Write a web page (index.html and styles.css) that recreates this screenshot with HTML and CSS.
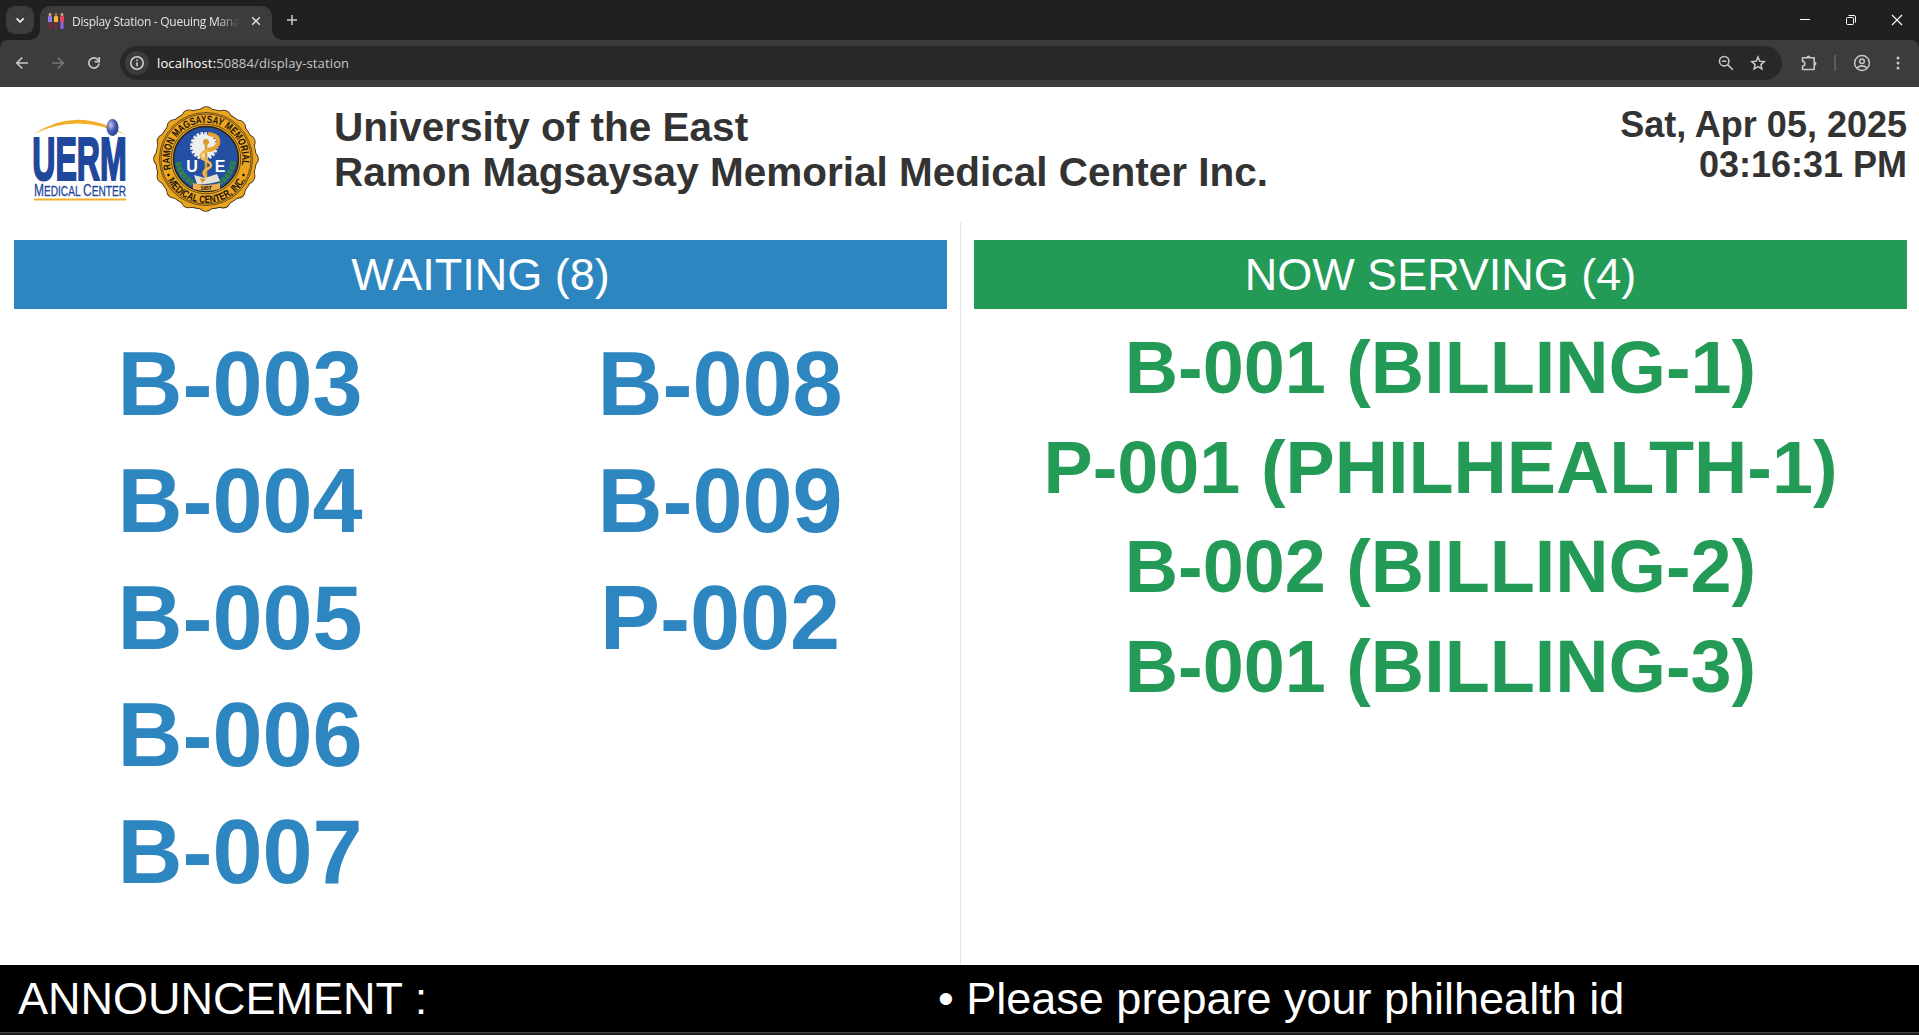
FILE: index.html
```html
<!DOCTYPE html>
<html lang="en">
<head>
<meta charset="utf-8">
<title>Display Station - Queuing Management</title>
<link rel="stylesheet" href="styles.css">
</head>
<body>
<div class="window">
  <div class="tabstrip">
    <div class="tab-search"><svg width="28" height="28" viewBox="0 0 28 28"><path d="M10.500 12.300l3.600 3.600 3.600-3.600" fill="none" stroke="#e3e3e3" stroke-width="1.800"/></svg></div>
    <div class="tab">
      <svg class="favicon" width="18" height="18" viewBox="0 0 18 18">
        <circle cx="3" cy="2.500" r="1.500" fill="#d9a58c"/><path d="M1 4.200h4v6H1z" fill="#8f7cf0"/><path d="M1.500 10.200h3v6.800h-3z" fill="#7a2742"/>
        <circle cx="9" cy="2.500" r="1.500" fill="#b8694c"/><path d="M7 4.200h4v6H7z" fill="#f3bf35"/><path d="M7.500 10.200h3v6.800h-3z" fill="#7a2742"/>
        <circle cx="15" cy="2.500" r="1.500" fill="#d9a58c"/><path d="M13 4.200h4v6h-4z" fill="#ee3f62"/><path d="M13.500 10.200h3v6.800h-3z" fill="#8567f5"/>
      </svg>
      <span class="tab-title">Display Station - Queuing Management</span>
      <svg class="tab-close" width="10" height="10" viewBox="0 0 10 10"><path d="M1.200 1.200l7.600 7.600M8.800 1.200L1.200 8.800" stroke="#e3e3e3" stroke-width="1.500"/></svg>
    </div>
    <svg class="new-tab" width="12" height="12" viewBox="0 0 12 12"><path d="M6 1v10M1 6h10" stroke="#c7c7c7" stroke-width="1.500"/></svg>
    <div class="window-buttons">
      <svg width="12" height="12" viewBox="0 0 12 12"><path d="M1 5.500h10" stroke="#fff"/></svg>
      <svg width="12" height="12" viewBox="0 0 12 12"><g fill="none" stroke="#fff"><rect x="1.500" y="3.500" width="7" height="7" rx="1"/><path d="M3.500 1.500h5.500q1.500 0 1.500 1.500v5.500"/></g></svg>
      <svg width="12" height="12" viewBox="0 0 12 12"><path d="M1 1l10 10M11 1L1 11" stroke="#fff" stroke-width="1.100"/></svg>
    </div>
  </div>
  <div class="toolbar">
    <svg class="nav back" width="16" height="16" viewBox="0 0 16 16"><path d="M14 8H3M8.300 2.500L2.800 8l5.500 5.500" fill="none" stroke="#c7c7c7" stroke-width="1.700"/></svg>
    <svg class="nav forward" width="16" height="16" viewBox="0 0 16 16"><path d="M2 8h11M7.700 2.500L13.200 8l-5.500 5.500" fill="none" stroke="#757575" stroke-width="1.700"/></svg>
    <svg class="nav reload" width="16" height="16" viewBox="0 0 16 16"><path d="M13 8.500A5.100 5.100 0 1 1 11.700 4.500L13 6" fill="none" stroke="#c7c7c7" stroke-width="1.700"/><path d="M13.200 2v4.600H8.600" fill="none" stroke="#c7c7c7" stroke-width="1.700"/></svg>
    <div class="omnibox">
      <div class="site-info"><svg width="16" height="16" viewBox="0 0 16 16"><circle cx="8" cy="8" r="6.200" fill="none" stroke="#d5d5d5" stroke-width="1.500"/><path d="M8 7.200v4M8 4.400v1.500" stroke="#d5d5d5" stroke-width="1.500"/></svg></div>
      <span class="url"><span class="host">localhost:</span>50884/display-station</span>
      <svg class="zoom" width="16" height="16" viewBox="0 0 16 16"><g fill="none" stroke="#c7c7c7" stroke-width="1.600"><circle cx="6.200" cy="6.200" r="4.700"/><path d="M9.600 9.600l5.200 5.200M4 6.200h4.400"/></g></svg>
      <svg class="star" width="16" height="16" viewBox="0 0 16 16"><path d="M8 2l1.800 4.200 4.500.4-3.400 3 1 4.400L8 11.700 4.100 14l1-4.400-3.400-3 4.500-.4z" fill="none" stroke="#c7c7c7" stroke-width="1.500"/></svg>
    </div>
    <svg class="extensions" width="18" height="18" viewBox="0 0 18 18"><path d="M2.500 3.800h11.700v11.700H2.500v-3.300q2.300-.2 2.300-2.500T2.500 7.200z" fill="none" stroke="#c7c7c7" stroke-width="1.600" stroke-linejoin="round"/><path d="M6.500 3.500a2 2 0 0 1 4 0zM14.500 7.700a2 2 0 0 1 0 4z" fill="#c7c7c7"/></svg>
    <i class="divider"></i>
    <svg class="profile" width="18" height="18" viewBox="0 0 18 18"><g fill="none" stroke="#c7c7c7" stroke-width="1.500"><circle cx="9" cy="9" r="7.400"/><circle cx="9" cy="7.200" r="2.300"/><path d="M3.800 14Q9 9.700 14.200 14"/></g></svg>
    <svg class="menu" width="4" height="16" viewBox="0 0 4 16"><g fill="#c7c7c7"><circle cx="2" cy="3" r="1.500"/><circle cx="2" cy="8" r="1.500"/><circle cx="2" cy="13" r="1.500"/></g></svg>
  </div>

  <main class="page">
    <header class="masthead">
      <svg class="uerm-logo" width="94" height="82" viewBox="0 0 94 82">
        <defs><radialGradient id="ball" cx=".35" cy=".35" r=".7"><stop offset="0" stop-color="#c8cdea"/><stop offset=".5" stop-color="#505db0"/><stop offset="1" stop-color="#1d3f94"/></radialGradient></defs>
        <path d="M0 15Q43-14 92 16Q43-6.500 0 15z" fill="#f2ae28"/>
        <text class="uerm-name" transform="translate(-1.800 61.200) scale(.527 1)">UERM</text>
        <ellipse cx="78.500" cy="8.500" rx="6" ry="8.500" fill="url(#ball)"/>
        <text class="uerm-sub" x="0" y="77" textLength="92" lengthAdjust="spacingAndGlyphs"><tspan class="cap">M</tspan>EDICAL <tspan class="cap">C</tspan>ENTER</text>
        <path d="M0 80.500h92" stroke="#f2ae28" stroke-width="1.800"/>
      </svg>
      <svg class="seal" width="108" height="108" viewBox="-54 -54 108 108">
        <defs>
          <path id="arcTop" d="M-34.400 11.200A36.200 36.200 0 1 1 34.400 11.200"/>
          <path id="arcBottom" d="M-38.900 20.700A44.100 44.100 0 0 0 38.900 20.700"/>
        </defs>
        <circle r="50.600" fill="#302817"/><circle class="scallop" r="45" stroke="#302817" stroke-width="15.600"/>
        <circle r="49.800" fill="#eca51f"/><circle class="scallop" r="45" stroke="#eca51f" stroke-width="14"/>
        <circle r="46.500" class="ring"/><circle r="45" class="ring"/><circle r="34.800" class="ring"/>
        <circle r="32.500" fill="#2450a4" stroke="#25221c" stroke-width="1.500"/>
        <text class="seal-text"><textPath href="#arcTop" textLength="130" lengthAdjust="spacingAndGlyphs" startOffset="1">RAMON MAGSAYSAY MEMORIAL</textPath></text>
        <text class="seal-text"><textPath href="#arcBottom" textLength="94" lengthAdjust="spacingAndGlyphs" startOffset="1">MEDICAL CENTER, INC.</textPath></text>
        <circle cx="-37.500" cy="16" r="1.200"/><circle cx="37.500" cy="16" r="1.200"/>
        <circle cx="-2" cy="-13" r="12" fill="#eee" stroke="#eee" stroke-width="4" stroke-dasharray="2.500 1.270"/>
        <path d="M2-25Q14-24 12-15Q9-9 1-9" fill="none" stroke="#e9a32c" stroke-width="4"/>
        <path d="M0-16V22" stroke="#d8a035" stroke-width="2.600"/><circle cy="-17" r="3" fill="#d89b2f"/>
        <path d="M2-9Q-9-5-3 0Q9 5 3 9Q-6 13 0 18" fill="none" stroke="#f0b94b" stroke-width="2.500"/>
        <path d="M-28 3Q-26 17-13 24M27 2Q26 15 14 24" fill="none" stroke="#32804a" stroke-width="5.500" stroke-dasharray="4 .8"/>
        <path d="M-12 16L-1 19 11 15 14 22Q0 26-9 25z" fill="#e4e0d2"/>
        <path d="M-6 19l6 1-4 4z" fill="#d8952f"/>
        <path d="M-13 24Q0 28 14 24V30Q0 34-13 30z" fill="#f0ad4b"/>
        <text class="seal-year" x="0" y="31">1957</text>
        <text class="seal-letter" x="-14" y="13">U</text><text class="seal-letter" x="14" y="13">E</text>
      </svg>
      <h1 class="name">University of the East<br>Ramon Magsaysay Memorial Medical Center Inc.</h1>
      <div class="clock">Sat, Apr 05, 2025<br>03:16:31 PM</div>
    </header>
    <div class="board">
      <section class="panel waiting">
        <h2>WAITING (8)</h2>
        <div class="tickets">
          <ul><li>B-003</li><li>B-004</li><li>B-005</li><li>B-006</li><li>B-007</li></ul>
          <ul><li>B-008</li><li>B-009</li><li>P-002</li></ul>
        </div>
      </section>
      <section class="panel serving">
        <h2>NOW SERVING (4)</h2>
        <ul><li>B-001 (BILLING-1)</li><li>P-001 (PHILHEALTH-1)</li><li>B-002 (BILLING-2)</li><li>B-001 (BILLING-3)</li></ul>
      </section>
    </div>
    <footer class="announcement"><span class="label">ANNOUNCEMENT :</span><span class="message">• Please prepare your philhealth id</span></footer>
  </main>
</div>
</body>
</html>
```
FILE: styles.css
```css
* { box-sizing: border-box; }
body { margin: 0; background: #fff; overflow: hidden; font-family: "Liberation Sans", Arial, sans-serif; }
h1, h2, ul { margin: 0; padding: 0; list-style: none; }
svg { display: block; flex: none; }
.window { width: 1919px; height: 1035px; display: flex; flex-direction: column; background: #1f2120; }

.tabstrip { height: 40px; flex: none; display: flex; align-items: center; background: #1f2120; font-family: "Open Sans", "Noto Sans", sans-serif; }
.tab-search { width: 28px; height: 28px; margin-left: 6px; border-radius: 9px; background: #3c3c3c; }
.tab { position: relative; width: 232px; height: 34px; margin: 6px 0 0 6px; padding: 0 11px 4px 7px; display: flex; align-items: center; border-radius: 10px 10px 0 0; background: #3c3c3c; }
.tab::before, .tab::after { content: ""; position: absolute; bottom: 0; width: 10px; height: 10px; }
.tab::before { left: -10px; background: radial-gradient(circle at 0 0, transparent 9.5px, #3c3c3c 10px); }
.tab::after { right: -10px; background: radial-gradient(circle at 100% 0, transparent 9.5px, #3c3c3c 10px); }
.tab-title { width: 168px; margin-left: 7px; overflow: hidden; white-space: nowrap; font-size: 12px; letter-spacing: -.27px; color: #e3e3e3; -webkit-mask-image: linear-gradient(90deg, #000 145px, transparent 168px); mask-image: linear-gradient(90deg, #000 145px, transparent 168px); }
.tab-close { margin-left: auto; }
.new-tab { margin-left: 14px; }
.window-buttons { margin-left: auto; margin-right: 16px; display: flex; gap: 34px; }

.toolbar { height: 47px; flex: none; display: flex; align-items: center; padding: 0 19px 1px 14px; background: #3c3c3c; border-radius: 8px 8px 0 0; }
.forward, .reload { margin-left: 20px; }
.omnibox { width: 1662px; height: 34px; margin-left: 18px; padding: 0 16px 0 5px; display: flex; align-items: center; border-radius: 17px; background: #282828; }
.site-info { width: 24px; height: 24px; display: grid; place-items: center; border-radius: 50%; background: #3c3c3c; }
.url { margin-left: 8px; font: 13px "Open Sans", "Noto Sans", sans-serif; letter-spacing: .13px; color: #c7c7c7; }
.host { color: #fff; }
.zoom { margin-left: auto; }
.star { margin-left: 16px; }
.extensions { margin-left: 18px; }
.divider { width: 2px; height: 16px; margin-left: 16px; background: #5c5c5c; }
.profile { margin-left: 17px; }
.menu { margin-left: auto; }

.page { height: 946px; flex: none; display: flex; flex-direction: column; background: #fff; border-bottom: 1px solid #444; }
.masthead { height: 135px; flex: none; display: flex; align-items: flex-start; padding: 0 12px 0 34px; color: #333; }
.uerm-logo { margin-top: 32px; overflow: visible; }
.uerm-name { font: bold 61px "Liberation Sans", Arial, sans-serif; fill: #1f479b; stroke: #1f479b; stroke-width: 2.2; }
.uerm-sub { font: 14px "Liberation Sans", Arial, sans-serif; fill: #1f479b; stroke: #1f479b; stroke-width: .3; }
.uerm-sub .cap { font-size: 16.5px; }
.seal { margin: 18px 0 0 24px; }
.scallop { fill: none; stroke-linecap: round; stroke-dasharray: 0 17.671; }
.ring { fill: none; stroke: #302817; stroke-width: .7; }
.seal-text { font: bold 10.5px "Liberation Sans", Arial, sans-serif; fill: #17130c; }
.seal-letter { font: bold 16px "Liberation Sans", Arial, sans-serif; fill: #fff; text-anchor: middle; }
.seal-year { font: bold 5px "Liberation Sans", Arial, sans-serif; text-anchor: middle; }
.name { margin: 18px 0 0 74px; font-size: 40.5px; line-height: 45px; white-space: nowrap; }
.clock { margin: 18px 0 0 auto; font-size: 36px; font-weight: bold; line-height: 40px; text-align: right; white-space: nowrap; }

.board { flex: 1; display: grid; grid-template-columns: 960px 959px; }
.panel { padding-top: 18px; text-align: center; }
.waiting { padding-left: 14px; padding-right: 13px; }
.serving { padding-left: 13px; padding-right: 12px; border-left: 1px solid #e6e6e6; }
.panel h2 { height: 69px; font-size: 45px; font-weight: normal; line-height: 69px; color: #fff; }
.waiting h2 { background: #2e86c1; }
.serving h2 { background: #239b56; }
.tickets { margin: 17px -13px 0 -14px; display: grid; grid-template-columns: 1fr 1fr; }
.tickets li { font-size: 90px; font-weight: bold; line-height: 117px; color: #2e86c1; }
.serving ul { margin-top: 9px; }
.serving li { font-size: 73.8px; font-weight: bold; line-height: 99.5px; color: #239b56; white-space: nowrap; }
.announcement { height: 67px; flex: none; display: flex; padding-left: 18px; background: #000; color: #fff; font-size: 45px; line-height: 67px; white-space: nowrap; }
.label { width: 920px; }
```
